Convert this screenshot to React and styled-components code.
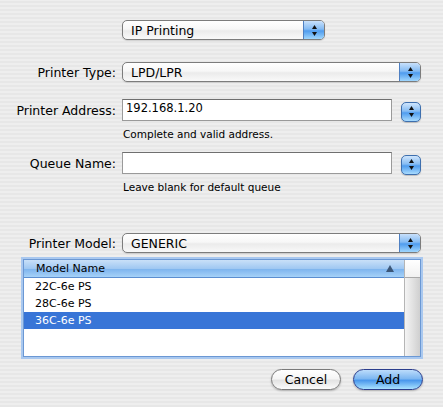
import styled, { createGlobalStyle } from 'styled-components'

const GlobalStyle = createGlobalStyle`
  html, body { margin: 0; padding: 0; }
  body { font-family: "DejaVu Sans", Verdana, sans-serif; }
`

const models = ['22C-6e PS', '28C-6e PS', '36C-6e PS']

const UpDown = () => (
  <svg width="7" height="13" viewBox="0 0 7 13">
    <path d="M3.5 1 L6 5 L1 5 Z" fill="#111" />
    <path d="M3.5 12 L6 8 L1 8 Z" fill="#111" />
  </svg>
)

const PopupButton = ({ value, width }) => (
  <Popup $w={width}>
    <PopupText>{value}</PopupText>
    <PopupArrows>
      <UpDown />
    </PopupArrows>
  </Popup>
)

const App = () => {
  return (
    <Page>
      <GlobalStyle />
      <Row $mt={20}>
        <Label />
        <PopupButton value="IP Printing" width={203} />
      </Row>
      <Row $mt={22}>
        <Label>Printer Type:</Label>
        <PopupButton value="LPD/LPR" />
      </Row>
      <Row $mt={17} $h={22}>
        <Label>Printer Address:</Label>
        <Field defaultValue="192.168.1.20" />
        <Stepper><UpDown /></Stepper>
      </Row>
      <Hint>Complete and valid address.</Hint>
      <Row $mt={11} $h={22}>
        <Label>Queue Name:</Label>
        <Field defaultValue="" />
        <Stepper><UpDown /></Stepper>
      </Row>
      <Hint>Leave blank for default queue</Hint>
      <Row $mt={39}>
        <Label>Printer Model:</Label>
        <PopupButton value="GENERIC" />
      </Row>
      <ListFrame>
        <ListMain>
          <ListHeader>
            <span>Model Name</span>
            <SortArrow />
          </ListHeader>
          {models.map((m, i) => (
            <ListRow key={m} $selected={i === 2}>{m}</ListRow>
          ))}
        </ListMain>
        <ScrollColumn>
          <Corner />
          <Track />
        </ScrollColumn>
      </ListFrame>
      <Buttons>
        <Button>Cancel</Button>
        <Button $primary>Add</Button>
      </Buttons>
    </Page>
  )
}

const Page = styled.div`
  width: 443px;
  height: 408px;
  box-sizing: border-box;
  padding-top: 1px;
  margin-top: -1px;
  padding-right: 22px;
  overflow: hidden;
  color: #000;
  background: repeating-linear-gradient(
    to bottom,
    #eeeeee 0px,
    #eeeeee 2px,
    #e7e7e7 2px,
    #e7e7e7 4px
  );
`
const Row = styled.div`
  display: flex;
  align-items: center;
  height: ${(p) => p.$h || 20}px;
  margin-top: ${(p) => p.$mt}px;
`
const Label = styled.div`
  width: 116px;
  flex: none;
  margin-right: 6px;
  text-align: right;
  font-size: 12.5px;
  line-height: 15px;
`
const Popup = styled.div`
  display: flex;
  align-items: center;
  box-sizing: border-box;
  width: ${(p) => (p.$w ? `${p.$w}px` : 'auto')};
  flex: ${(p) => (p.$w ? 'none' : '1')};
  height: 20px;
  border: 1px solid #7c7c7c;
  border-radius: 5px;
  overflow: hidden;
  background: linear-gradient(#ffffff, #f7f7f7 45%, #ebebeb 55%, #f9f9f9);
  box-shadow: 0 1px 1px rgba(0, 0, 0, 0.12);
`
const PopupText = styled.span`
  flex: 1;
  padding-left: 8px;
  font-size: 12.5px;
  white-space: nowrap;
`
const PopupArrows = styled.div`
  align-self: stretch;
  width: 20px;
  display: flex;
  align-items: center;
  justify-content: center;
  border-left: 1px solid #4f80c2;
  background: linear-gradient(#c8e0fb, #84bbf3 45%, #4f9cee 55%, #9fd6fd);
`
const Field = styled.input`
  flex: 1;
  min-width: 0;
  box-sizing: border-box;
  height: 22px;
  margin: 0;
  padding: 0 3px 5px;
  border: 1px solid #9a9a9a;
  border-top-color: #6f6f6f;
  background: #fff;
  font-family: "DejaVu Sans", Verdana, sans-serif;
  font-size: 11.5px;
  outline: none;
`
const Stepper = styled.div`
  flex: none;
  box-sizing: border-box;
  width: 20px;
  height: 20px;
  margin: 3px 0 0 9px;
  display: flex;
  align-items: center;
  justify-content: center;
  border: 1px solid #3e6fae;
  border-radius: 5px;
  background: linear-gradient(#cfe5fc, #86bcf3 45%, #4f9cee 55%, #a8dbfe);
  box-shadow: 0 1px 1px rgba(0, 0, 0, 0.2);
`
const Hint = styled.div`
  margin: 7px 0 0 123px;
  height: 13px;
  line-height: 13px;
  font-size: 10.5px;
`
const ListFrame = styled.div`
  display: flex;
  box-sizing: border-box;
  margin: 6px 0 0 23px;
  height: 98px;
  border: 1px solid #6b98d4;
  box-shadow: 0 0 0 2px #a9c8ef;
  background: #fff;
`
const ListMain = styled.div`
  flex: 1;
  display: flex;
  flex-direction: column;
`
const ListHeader = styled.div`
  display: flex;
  align-items: center;
  justify-content: space-between;
  height: 17px;
  padding: 0 10px 0 12px;
  border-bottom: 1px solid #5b8ed0;
  background: linear-gradient(#c9e0f8, #a0c8f2 50%, #7fb5ee 55%, #a6d2f8);
  font-size: 11px;
`
const SortArrow = styled.span`
  width: 0;
  height: 0;
  border-left: 4px solid transparent;
  border-right: 4px solid transparent;
  border-bottom: 7px solid #3b5778;
`
const ListRow = styled.div`
  height: 17px;
  line-height: 17px;
  padding-left: 11px;
  font-size: 11px;
  background: ${(p) => (p.$selected ? '#3875d7' : '#fff')};
  color: ${(p) => (p.$selected ? '#fff' : '#000')};
`
const ScrollColumn = styled.div`
  width: 15px;
  display: flex;
  flex-direction: column;
  border-left: 1px solid #b5b5b5;
`
const Corner = styled.div`
  height: 17px;
  border-bottom: 1px solid #a9a9a9;
  background: linear-gradient(#ffffff, #f1f1f1);
`
const Track = styled.div`
  flex: 1;
  background: linear-gradient(to right, #f4f4f4, #e2e2e2 50%, #cfcfcf);
`
const Buttons = styled.div`
  display: flex;
  justify-content: flex-end;
  gap: 12px;
  margin-top: 12px;
  margin-right: -2px;
`
const Button = styled.button`
  width: 70px;
  height: 21px;
  padding: 0;
  border: 1px solid ${(p) => (p.$primary ? '#2b3d8c' : '#7a7a7a')};
  border-radius: 11px;
  font-family: "DejaVu Sans", Verdana, sans-serif;
  font-size: 12.5px;
  color: #000;
  background: ${(p) =>
    p.$primary
      ? 'linear-gradient(#bcdcfb, #7eb7f1 45%, #4b98ec 55%, #a9e2ff)'
      : 'linear-gradient(#ffffff, #f5f5f5 45%, #e3e3e3 55%, #fbfbfb)'};
  box-shadow: 0 1px 2px rgba(0, 0, 0, 0.25);
`

export default App
